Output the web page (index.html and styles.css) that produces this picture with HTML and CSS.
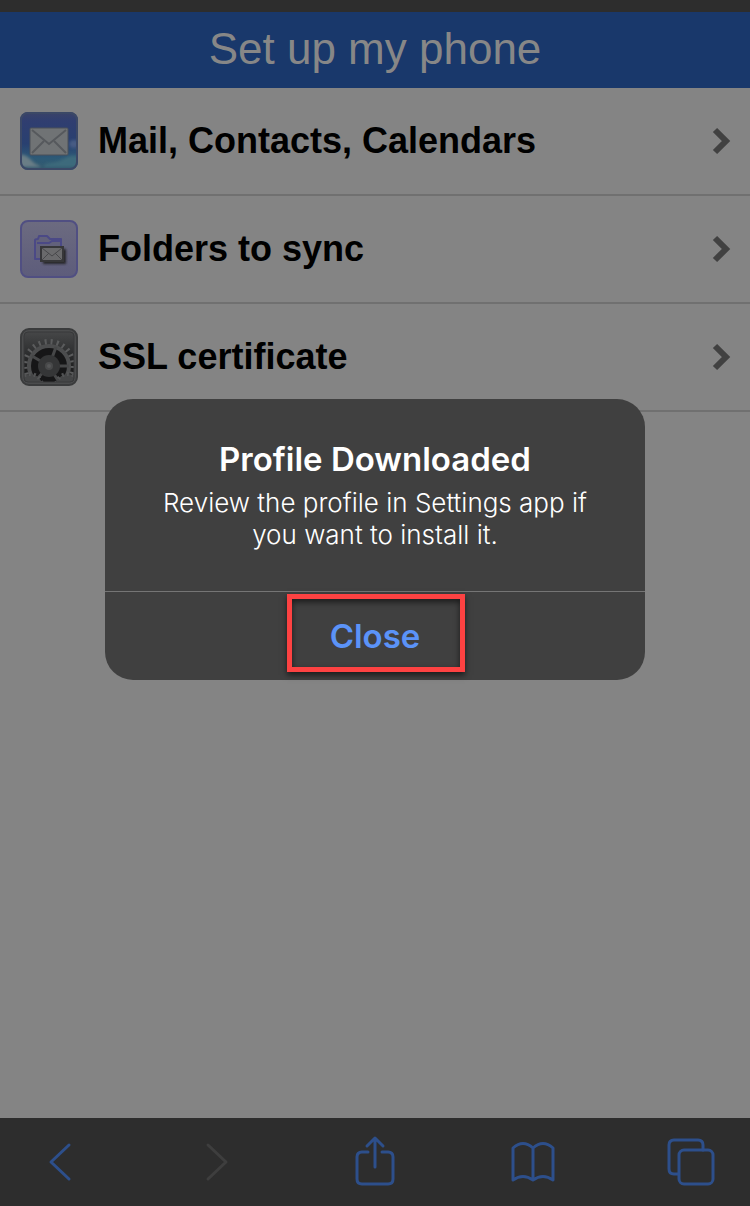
FILE: index.html
```html
<!DOCTYPE html>
<html lang="en">
<head>
    <meta charset="UTF-8">
    <meta name="viewport" content="width=device-width, initial-scale=1.0">
    <title>Set up my phone</title>
    <link rel="stylesheet" href="styles.css">
</head>
<body>

<div class="page">
    <div class="status-strip"></div>
    <header class="header">
        <h1>Set up my phone</h1>
    </header>

    <main class="content">
        <ul class="menu">
            <li>
                <a class="menu-item" href="#mail">
                    <svg class="menu-icon" viewBox="0 0 58 58" aria-hidden="true">
                        <defs>
                            <linearGradient id="sky" x1="0" y1="0" x2="0" y2="1">
                                <stop offset="0" stop-color="#3b4367"/>
                                <stop offset="0.15" stop-color="#303e70"/>
                                <stop offset="0.55" stop-color="#294070"/>
                                <stop offset="0.8" stop-color="#2d5a76"/>
                                <stop offset="1" stop-color="#34596c"/>
                            </linearGradient>
                            <clipPath id="mail-clip"><rect width="58" height="58" rx="8"/></clipPath>
                            <filter id="soft"><feGaussianBlur stdDeviation="1.5"/></filter>
                        </defs>
                        <g clip-path="url(#mail-clip)">
                            <rect width="58" height="58" fill="url(#sky)"/>
                            <g filter="url(#soft)">
                                <path d="M0 43c5-1 9 3 13 7 3 3 6 3 8 5H0z" fill="#6a7e86"/>
                                <path d="M24 53c7-3 14-2 19-6 5-3 10-4 15-3v11H24z" fill="#3d6a7c"/>
                                <ellipse cx="54" cy="32" rx="5" ry="4" fill="#465c84"/>
                            </g>
                        </g>
                        <rect x="1" y="1" width="56" height="56" rx="7" fill="none" stroke="#3b4866" stroke-width="2"/>
                        <rect x="10" y="16" width="38" height="27" rx="1" fill="#707375" stroke="#4b5159" stroke-width="1"/>
                        <path d="M12 41l12-12M46 41L34 29" fill="none" stroke="#56595d" stroke-width="2"/>
                        <path d="M12 18l17 14 17-14" fill="none" stroke="#56595d" stroke-width="2"/>
                    </svg>
                    <span class="menu-label">Mail, Contacts, Calendars</span>
                    <svg class="menu-arrow" viewBox="0 0 20 28" aria-hidden="true"><path d="M3 3l11 11L3 25"/></svg>
                </a>
            </li>
            <li>
                <a class="menu-item" href="#folders">
                    <svg class="menu-icon" viewBox="0 0 58 58" aria-hidden="true">
                        <defs>
                            <linearGradient id="lilac" x1="0" y1="0" x2="0" y2="1">
                                <stop offset="0" stop-color="#6c6b80"/>
                                <stop offset="1" stop-color="#5d5c7b"/>
                            </linearGradient>
                            <filter id="shade"><feGaussianBlur stdDeviation="1"/></filter>
                        </defs>
                        <rect x="1" y="1" width="56" height="56" rx="7" fill="url(#lilac)" stroke="#504f82" stroke-width="2"/>
                        <path d="M15 39V20q0-1 3-1l1-3h8l3 3h11v20z" fill="#62617b" stroke="#4b4986" stroke-width="2" stroke-linejoin="round"/>
                        <path d="M17 23h12l3-2h9" fill="none" stroke="#4b4986" stroke-width="2"/>
                        <rect x="23" y="29" width="23" height="15" fill="#252529" filter="url(#shade)"/>
                        <rect x="21" y="27" width="22" height="14" fill="#6a6a6c" stroke="#37373a" stroke-width="2"/>
                        <path d="M22 40l7-7M42 40l-7-7M22 28l10 8 10-8" fill="none" stroke="#48484b" stroke-width="1"/>
                    </svg>
                    <span class="menu-label">Folders to sync</span>
                    <svg class="menu-arrow" viewBox="0 0 20 28" aria-hidden="true"><path d="M3 3l11 11L3 25"/></svg>
                </a>
            </li>
            <li>
                <a class="menu-item" href="#ssl">
                    <svg class="menu-icon" viewBox="0 0 58 58" aria-hidden="true">
                        <defs>
                            <linearGradient id="steel" x1="0" y1="0" x2="0" y2="1">
                                <stop offset="0" stop-color="#464748"/>
                                <stop offset="0.5" stop-color="#292a2b"/>
                                <stop offset="1" stop-color="#151515"/>
                            </linearGradient>
                            <clipPath id="gear-clip"><rect x="4" y="4" width="50" height="50" rx="4"/></clipPath>
                        </defs>
                        <rect x="1" y="1" width="56" height="56" rx="8" fill="#4b4c4d" stroke="#3a3b3c" stroke-width="2"/>
                        <g clip-path="url(#gear-clip)">
                            <rect x="4" y="4" width="50" height="50" fill="url(#steel)"/>
                            <circle cx="29" cy="38" r="24" fill="none" stroke="#5b5c5d" stroke-width="6" stroke-dasharray="2 4"/>
                            <circle cx="29" cy="38" r="20" fill="#161617" stroke="#4c4d4e" stroke-width="4"/>
                            <path d="M29 38L36 19M29 38L12 28M29 38h20M29 38L16 52M29 38l10 16" stroke="#464748" stroke-width="3"/>
                            <circle cx="29" cy="38" r="11" fill="#353637"/>
                            <circle cx="29" cy="38" r="4" fill="#48494a"/>
                            <circle cx="29" cy="38" r="2" fill="#565758"/>
                            <circle cx="10" cy="58" r="12" fill="#454647" stroke="#535455" stroke-width="4" stroke-dasharray="2 3"/>
                            <circle cx="48" cy="58" r="12" fill="#454647" stroke="#535455" stroke-width="4" stroke-dasharray="2 3"/>
                        </g>
                        <rect x="4" y="4" width="50" height="50" rx="4" fill="none" stroke="#38393a" stroke-width="1"/>
                    </svg>
                    <span class="menu-label">SSL certificate</span>
                    <svg class="menu-arrow" viewBox="0 0 20 28" aria-hidden="true"><path d="M3 3l11 11L3 25"/></svg>
                </a>
            </li>
        </ul>
    </main>

    <nav class="toolbar">
        <button type="button" aria-label="Back">
            <svg viewBox="0 0 56 56"><path d="M37 11L19 28l18 17"/></svg>
        </button>
        <button type="button" aria-label="Forward" disabled>
            <svg viewBox="0 0 56 56"><path d="M18 11l18 17-18 17"/></svg>
        </button>
        <button type="button" aria-label="Share">
            <svg viewBox="0 0 56 56"><path d="M21 18h-6q-5 0-5 5v22q0 5 5 5h26q5 0 5-5V23q0-5-5-5h-6M28 33V5M20 12l8-8 8 8"/></svg>
        </button>
        <button type="button" aria-label="Bookmarks">
            <svg viewBox="0 0 56 56"><path d="M28 46V14Q18 5 8 14v32q10-7 20 0 10-7 20 0V14q-10-9-20 0"/></svg>
        </button>
        <button type="button" aria-label="Tabs">
            <svg viewBox="0 0 56 56"><path d="M16 40h-4q-5 0-5-5V11q0-5 5-5h24q5 0 5 5v5"/><rect x="17" y="16" width="34" height="34" rx="5"/></svg>
        </button>
    </nav>
</div>

<div class="overlay">
    <section class="alert" role="dialog" aria-labelledby="alert-title" aria-describedby="alert-text">
        <div class="alert-body">
            <h2 id="alert-title">Profile Downloaded</h2>
            <p id="alert-text">Review the profile in Settings app if you want to install it.</p>
        </div>
        <button class="alert-close" type="button">Close</button>
    </section>
</div>

</body>
</html>
```

FILE: styles.css
```css
* {
    box-sizing: border-box;
}

body {
    margin: 0;
    font-family: "Liberation Sans", Arial, sans-serif;
    background-color: #848484;
}

.page {
    display: flex;
    flex-direction: column;
    min-height: 100vh;
}

.status-strip {
    height: 12px;
    background-color: #2d2d2d;
}

.header {
    padding: 12px 20px 14px;
    background-color: #19386b;
    text-align: center;
}

.header h1 {
    margin: 0;
    font-size: 44px;
    font-weight: normal;
    line-height: 50px;
    color: #878787;
}

.content {
    flex: 1;
}

.menu {
    margin: 0;
    padding: 0;
    list-style: none;
}

.menu-item {
    display: flex;
    align-items: center;
    gap: 20px;
    padding: 24px 18px 24px 20px;
    border-bottom: 2px solid #707070;
    color: #000;
    text-decoration: none;
}

.menu-icon {
    flex: none;
    width: 58px;
    height: 58px;
}

.menu-label {
    flex: 1;
    font-size: 36px;
    font-weight: bold;
    line-height: 40px;
}

.menu-arrow {
    flex: none;
    width: 20px;
    height: 28px;
    fill: none;
    stroke: #414141;
    stroke-width: 6;
}

.toolbar {
    display: flex;
    justify-content: space-between;
    padding: 0 16px;
    background-color: #2d2d2d;
}

.toolbar button {
    display: flex;
    align-items: center;
    justify-content: center;
    width: 88px;
    height: 88px;
    padding: 0;
    border: 0;
    background: none;
    color: #2d4f8b;
}

.toolbar button:disabled {
    color: #3e3e3e;
}

.toolbar svg {
    width: 56px;
    height: 56px;
    fill: none;
    stroke: currentColor;
    stroke-width: 3;
    stroke-linecap: round;
    stroke-linejoin: round;
}

.overlay {
    position: fixed;
    inset: 0;
    display: flex;
    align-items: center;
    justify-content: center;
    padding-bottom: 127px;
}

.alert {
    width: 72%;
    border-radius: 28px;
    background-color: #404040;
    font-family: Inter, "Liberation Sans", sans-serif;
    color: #fff;
    text-align: center;
}

.alert-body {
    padding: 39px 32px 40px;
    border-bottom: 1px solid #757575;
}

.alert-body h2 {
    margin: 0 0 7px;
    font-size: 33px;
    font-weight: 600;
    line-height: 42px;
}

.alert-body p {
    margin: 0;
    font-size: 26px;
    font-weight: 300;
    line-height: 32px;
}

.alert-close {
    position: relative;
    display: block;
    width: 100%;
    height: 88px;
    padding: 0;
    border: 0;
    background: none;
    font-family: inherit;
    font-size: 33px;
    font-weight: 600;
    color: #5b93f8;
}

/* red frame around the button label */
.alert-close::after {
    content: "";
    position: absolute;
    top: 2px;
    left: calc(50% - 88px);
    box-sizing: border-box;
    width: 178px;
    height: 78px;
    border: 5px solid #fd4242;
    box-shadow: 0 3px 6px rgba(0, 0, 0, 0.6), inset 0 3px 6px rgba(0, 0, 0, 0.6);
}
```
